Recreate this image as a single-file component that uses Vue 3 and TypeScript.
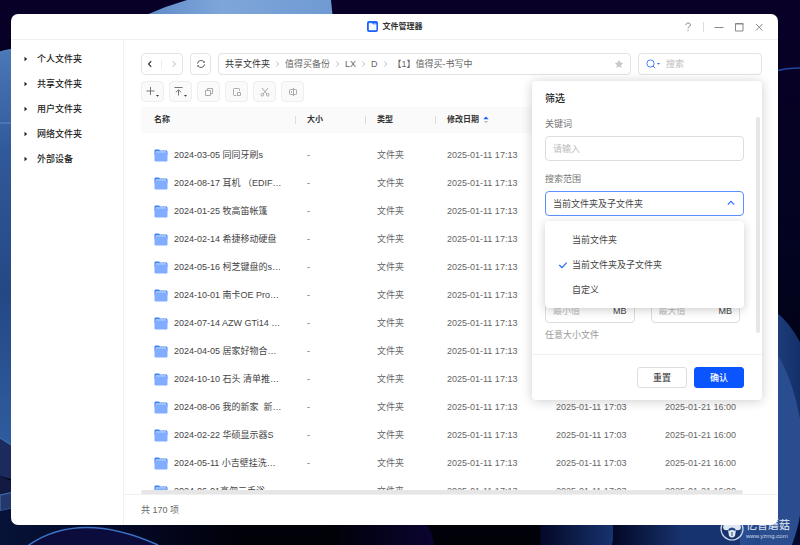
<script setup lang="ts">
import { ref } from 'vue'

interface FileRow {
  name: string
  modified: string
  created: string
}

const places: string[] = ['个人文件夹', '共享文件夹', '用户文件夹', '网络文件夹', '外部设备']
const crumbs: string[] = ['共享文件夹', '值得买备份', 'LX', 'D', '【1】值得买-书写中']
const scopes: string[] = ['当前文件夹', '当前文件夹及子文件夹', '自定义']

const names: string[] = [
  '2024-03-05 同同牙刷s',
  '2024-08-17 耳机 （EDIF…',
  '2024-01-25 牧高笛帐篷',
  '2024-02-14 希捷移动硬盘',
  '2024-05-16 柯芝键盘的s…',
  '2024-10-01 南卡OE Pro…',
  '2024-07-14 AZW GTi14 …',
  '2024-04-05 居家好物合…',
  '2024-10-10 石头 清单推…',
  '2024-08-06 我的新家\u00a0 新…',
  '2024-02-22 华硕显示器S',
  '2024-05-11 小吉壁挂洗…',
  '2024-06-01高勿二手浴…',
]
const rows: FileRow[] = names.map((name) => ({
  name,
  modified: '2025-01-11 17:13',
  created: '2025-01-11 17:03',
}))

const keyword = ref('')
const query = ref('')
const minSize = ref('')
const maxSize = ref('')
const scope = ref(scopes[1])
const scopeOpen = ref(true)

function pickScope(value: string): void {
  scope.value = value
  scopeOpen.value = false
}

function resetFilter(): void {
  keyword.value = ''
  minSize.value = ''
  maxSize.value = ''
  scope.value = scopes[1]
}
</script>

<template>
  <div class="desktop">
    <svg class="wallpaper" viewBox="0 0 800 545" preserveAspectRatio="none" aria-hidden="true">
      <defs>
        <linearGradient id="night" x1="0" y1="0" x2="0" y2="1">
          <stop offset="0" stop-color="#090027" />
          <stop offset="0.5" stop-color="#02041f" />
          <stop offset="1" stop-color="#010108" />
        </linearGradient>
        <linearGradient id="petal" x1="0" y1="0" x2="1" y2="0">
          <stop offset="0" stop-color="#5d8bc6" />
          <stop offset="0.4" stop-color="#7fa6da" />
          <stop offset="1" stop-color="#6f9ad2" />
        </linearGradient>
        <linearGradient id="left" x1="0" y1="0" x2="0" y2="1">
          <stop offset="0" stop-color="#4b78b8" />
          <stop offset="0.25" stop-color="#315a9a" />
          <stop offset="0.6" stop-color="#244884" />
          <stop offset="1" stop-color="#2f5da0" />
        </linearGradient>
        <linearGradient id="right" x1="0" y1="0" x2="1" y2="0">
          <stop offset="0" stop-color="#2a4f92" />
          <stop offset="1" stop-color="#14306a" />
        </linearGradient>
        <linearGradient id="corner" x1="0" y1="0" x2="1" y2="0">
          <stop offset="0" stop-color="#061238" />
          <stop offset="0.6" stop-color="#030722" />
          <stop offset="1" stop-color="#010108" />
        </linearGradient>
        <linearGradient id="fold" x1="0" y1="0" x2="1" y2="0">
          <stop offset="0" stop-color="#030826" />
          <stop offset="1" stop-color="#17336f" />
        </linearGradient>
        <linearGradient id="indigo" x1="0" y1="0" x2="1" y2="0">
          <stop offset="0" stop-color="#010108" />
          <stop offset="1" stop-color="#0a0430" />
        </linearGradient>
      </defs>
      <rect width="800" height="545" fill="url(#night)" />
      <path d="M146 15Q166 6 187 0H331L333 20H146Z" fill="url(#petal)" />
      <path d="M0 52Q6 50 14 49V450L0 438Z" fill="url(#left)" />
      <path d="M0 52Q6 50 14 49M0 123H14" fill="none" stroke="#5d89c4" />
      <path d="M0 438L14 447V480L0 476Z" fill="#1c2b5c" />
      <path d="M0 438L14 447" stroke="#4776bb" />
      <path d="M0 476L14 482V496H0Z" fill="#131a42" />
      <path d="M0 495L14 492V508L0 511Z" fill="#24386b" stroke="#4776bb" />
      <path d="M0 511L14 508V522H240V545H0Z" fill="url(#corner)" />
      <path d="M26 547Q85 508 168 547Z" transform="translate(0 4)" fill="#0c0c3c" />
      <path d="M26 547Q78 509 158 545" fill="#0c0c3c" stroke="#3a72c4" stroke-width="1.5" />
      <path d="M330 522H425Q433 534 434 545H330Z" fill="url(#indigo)" />
      <path d="M540 522H613Q615 534 612 545H540Z" fill="url(#fold)" />
      <path d="M613 522H683V545H613Z" fill="url(#fold)" />
      <path d="M683 522H780V545H683Z" fill="#16336f" />
      <path d="M776 71Q786 68 800 68" fill="none" stroke="#2147a0" stroke-width="1.5" />
      <path d="M776 312Q789 322 800 342V545H740V522H776Z" fill="url(#right)" />
      <path d="M776 352Q794 380 802 430V510Q797 530 792 545H760V522H776Z" fill="#294d8e" />
      <path d="M800 515V545H792Q798 530 800 515Z" fill="#050a2c" />
    </svg>

    <main class="window">
      <header class="titlebar">
        <h1 class="app-name">
          <svg width="11" height="11" viewBox="0 0 11 11" aria-hidden="true">
            <rect width="11" height="11" rx="2" fill="#1c62ff" />
            <path d="M2 2.2H5L6 3.5H9.2V9H2Z" fill="#f4f8ff" stroke="#fff" stroke-width=".4" />
            <path d="M6.2 2.2H9.2V3H6.8Z" fill="#8fb4ff" />
          </svg>
          文件管理器
        </h1>
        <div class="window-controls">
          <button class="plain" type="button" aria-label="帮助">
            <svg width="10" height="10" viewBox="0 0 10 10"><path d="M2.8 3.1C2.8 .3 7.4 .3 7.4 3C7.4 4.7 5 4.6 5 6.5M5 8V9.2" /></svg>
          </button>
          <span class="control-rule"></span>
          <button class="plain" type="button" aria-label="最小化">
            <svg width="10" height="10" viewBox="0 0 10 10"><path d="M.5 5.5H9.5" /></svg>
          </button>
          <button class="plain" type="button" aria-label="最大化">
            <svg width="10" height="10" viewBox="0 0 10 10"><path d="M1.5 1.5H9V9H1.5Z" /><path d="M1 2H9.5" /></svg>
          </button>
          <button class="plain" type="button" aria-label="关闭">
            <svg width="10" height="10" viewBox="0 0 10 10"><path d="M2 2L8.5 8.5M8.5 2L2 8.5" /></svg>
          </button>
        </div>
      </header>

      <div class="body">
        <nav class="sidebar">
          <a v-for="place in places" :key="place" class="place" href="#">
            <svg width="4" height="6" viewBox="0 0 4 6" aria-hidden="true"><path d="M.5 .8L3.2 3L.5 5.2Z" fill="#222" /></svg>
            {{ place }}
          </a>
        </nav>

        <section class="content">
          <div class="location-bar">
            <div class="history box">
              <button class="plain" type="button" aria-label="后退">
                <svg width="10" height="10" viewBox="0 0 10 10"><path d="M6.2 2.2L3.6 5L6.2 7.8" class="back" /></svg>
              </button>
              <span class="history-rule"></span>
              <button class="plain" type="button" aria-label="前进">
                <svg width="10" height="10" viewBox="0 0 10 10"><path d="M3.8 2.2L6.4 5L3.8 7.8" class="forward" /></svg>
              </button>
            </div>
            <button class="reload box" type="button" aria-label="刷新">
              <svg width="10" height="10" viewBox="0 0 10 10"><path d="M1.5 4.6A3.5 3.5 0 0 1 8 3.2M8.5 5.4A3.5 3.5 0 0 1 2 6.8" stroke="#555" /><path d="M6.9 3.7H8.8V1.9ZM3.1 6.3H1.2V8.1Z" fill="#555" /></svg>
            </button>
            <div class="path box">
              <template v-for="(crumb, i) in crumbs" :key="crumb">
                <svg v-if="i" class="crumb-arrow" width="5" height="8" viewBox="0 0 5 8" aria-hidden="true"><path d="M1.3 1.5L3.7 4L1.3 6.5" /></svg>
                <a class="crumb" :class="{ first: i === 0 }" href="#">{{ crumb }}</a>
              </template>
              <button class="plain star" type="button" aria-label="收藏">
                <svg width="10" height="10" viewBox="0 0 10 10"><path d="M5 .8L6.3 3.5L9.2 3.9L7.1 5.9L7.6 8.9L5 7.5L2.4 8.9L2.9 5.9L.8 3.9L3.7 3.5Z" fill="#c8c8c8" stroke="none" /></svg>
              </button>
            </div>
            <div class="search">
              <label class="search-box box">
                <svg width="14" height="10" viewBox="0 0 14 10" aria-hidden="true"><g fill="none" stroke="#4c7dff"><circle cx="4.5" cy="4.5" r="3.6" /><path d="M7 7L9.2 9.2" /></g><path d="M11 4H14L12.5 5.8Z" fill="#2b62ff" /></svg>
                <input v-model="query" type="search" placeholder="搜索" aria-label="搜索">
              </label>

              <form class="filter" @submit.prevent>
                <div class="filter-scroll">
                  <h2>筛选</h2>
                  <label class="field-label" for="keyword">关键词</label>
                  <input id="keyword" v-model="keyword" class="field" type="text" placeholder="请输入">
                  <label class="field-label" for="scope">搜索范围</label>
                  <div class="select-wrap">
                    <select id="scope" v-model="scope" class="field active" @mousedown.prevent="scopeOpen = !scopeOpen">
                      <option v-for="item in scopes" :key="item" :value="item">{{ item }}</option>
                    </select>
                    <svg class="select-arrow" width="10" height="8" viewBox="0 0 10 8" aria-hidden="true"><path d="M1.8 5.6L5 2.4L8.2 5.6" /></svg>
                    <div v-if="scopeOpen" class="menu" role="listbox" aria-label="搜索范围">
                      <button v-for="item in scopes" :key="item" class="menu-item" type="button" role="option" :aria-selected="item === scope" @click="pickScope(item)">
                        <svg width="10" height="8" viewBox="0 0 10 8" aria-hidden="true"><path v-if="item === scope" d="M1.3 4L4 6.6L8.7 1.6" /></svg>
                        {{ item }}
                      </button>
                    </div>
                  </div>
                  <div class="sizes">
                    <label class="field size"><input v-model="minSize" type="text" placeholder="最小值" aria-label="最小值"><span>MB</span></label>
                    <label class="field size"><input v-model="maxSize" type="text" placeholder="最大值" aria-label="最大值"><span>MB</span></label>
                  </div>
                  <p class="hint">任意大小文件</p>
                  <span class="filter-thumb"></span>
                </div>
                <footer class="filter-actions">
                  <button class="action" type="button" @click="resetFilter">重置</button>
                  <button class="action primary" type="submit">确认</button>
                </footer>
              </form>
            </div>
          </div>

          <div class="toolbar">
            <button class="tool" type="button" aria-label="新建">
              <svg width="14" height="12" viewBox="0 0 14 12"><path d="M4.5 1V9M.5 5H8.5" /><path d="M10 9H13L11.5 10.8Z" class="caret" /></svg>
            </button>
            <button class="tool" type="button" aria-label="上传">
              <svg width="14" height="12" viewBox="0 0 14 12"><path d="M.5 1.5H8.5M4.5 9.5V4M1.8 6.4L4.5 3.8L7.2 6.4" /><path d="M10 9H13L11.5 10.8Z" class="caret" /></svg>
            </button>
            <button class="tool off" type="button" aria-label="复制">
              <svg width="10" height="10" viewBox="0 0 10 10"><path d="M3.5 3V1.5H8.5V6.5H6.5M1.5 3.5H6.5V8.5H1.5Z" /></svg>
            </button>
            <button class="tool off" type="button" aria-label="粘贴">
              <svg width="10" height="10" viewBox="0 0 10 10"><path d="M4.5 8.5H2.3Q1.5 8.5 1.5 7.7V2.3Q1.5 1.5 2.3 1.5H6.7Q7.5 1.5 7.5 2.3V4M5.5 5.5H8.5V8.5H5.5Z" /></svg>
            </button>
            <button class="tool off" type="button" aria-label="剪切">
              <svg width="10" height="10" viewBox="0 0 10 10"><path d="M2 1L7 7M8 1L3 7" /><circle cx="2.3" cy="7.8" r="1.3" /><circle cx="7.7" cy="7.8" r="1.3" /></svg>
            </button>
            <button class="tool off" type="button" aria-label="重命名">
              <svg width="10" height="10" viewBox="0 0 10 10"><path d="M5.5 2.5H2.3Q1.5 2.5 1.5 3.3V6.7Q1.5 7.5 2.3 7.5H5.5M5.5 2.5H7.7Q8.5 2.5 8.5 3.3V6.7Q8.5 7.5 7.7 7.5H5.5M5.5 .8V9.2M3.5 4V6" /></svg>
            </button>
          </div>

          <div class="list">
            <table>
              <colgroup>
                <col class="col-name"><col class="col-short"><col class="col-short"><col class="col-date"><col class="col-date"><col class="col-date">
              </colgroup>
              <thead>
                <tr>
                  <th>名称</th>
                  <th>大小</th>
                  <th>类型</th>
                  <th>
                    修改日期
                    <svg class="sort" width="6" height="8" viewBox="0 0 6 8" aria-hidden="true"><path d="M.3 3.2L3 .6L5.7 3.2Z" fill="#1b5cff" /><path d="M.6 5L3 7.2L5.4 5Z" fill="#b9c3d6" /></svg>
                  </th>
                  <th></th>
                  <th></th>
                </tr>
              </thead>
              <tbody>
                <tr v-for="row in rows" :key="row.name">
                  <td>
                    <span class="file">
                      <svg width="14" height="13" viewBox="0 0 14 13" aria-hidden="true">
                        <path d="M.5 1.2Q.5 .4 1.3 .4H5L6 1.4H12.4Q13.4 1.4 13.4 2.4V6H.5Z" fill="#3d87f5" />
                        <rect x="1.8" y="2.2" width="10.4" height="3" fill="#b5d2ff" />
                        <path d="M.5 3.4H13.5V11.5Q13.5 12.5 12.5 12.5H1.5Q.5 12.5 .5 11.5Z" fill="#80adff" />
                      </svg>
                      {{ row.name }}
                    </span>
                  </td>
                  <td>-</td>
                  <td>文件夹</td>
                  <td>{{ row.modified }}</td>
                  <td>{{ row.created }}</td>
                  <td>2025-01-21 16:00</td>
                </tr>
              </tbody>
            </table>
          </div>
          <div class="track"><div class="thumb"></div></div>
          <footer class="status">共 170 项</footer>
        </section>
      </div>
    </main>

    <div class="watermark">
      <svg width="24" height="24" viewBox="0 0 24 24" aria-hidden="true">
        <circle cx="12" cy="12" r="11" fill="none" stroke="#cfd9ea" stroke-width="1.2" />
        <path d="M3 11Q4 3 12 3Q20 3 21 11Q20 14 16 13L15 19Q12 22 9 19L8 13Q4 14 3 11Z" fill="#dfe7f3" />
        <path d="M8 13Q9 10.5 12 10.5Q15 10.5 16 13L15 14Q12 12 9 14Z" fill="#254a87" />
        <path d="M12 15V19" stroke="#254a87" />
      </svg>
      <div class="watermark-text"><strong>亿智蘑菇</strong><span>www.yzmg.com</span></div>
    </div>
  </div>
</template>

<style>
body {
  margin: 0;
  background: #04021c;
}
</style>

<style scoped>
.desktop {
  position: relative;
  box-sizing: border-box;
  height: 100vh;
  padding: 14px 22px 20px 11px;
  overflow: hidden;
  font-family: "Liberation Sans", "Noto Sans CJK SC", sans-serif;
  font-size: 9px;
  line-height: 14px;
  color: #444;
}
.desktop *,
.desktop *::before {
  box-sizing: border-box;
}
.wallpaper {
  position: absolute;
  inset: 0;
  width: 100%;
  height: 100%;
}
button,
input,
select {
  margin: 0;
  padding: 0;
  font: inherit;
  color: inherit;
}
a {
  color: inherit;
  text-decoration: none;
}
svg {
  flex: none;
}
.window {
  position: relative;
  z-index: 1;
  display: flex;
  flex-direction: column;
  height: 100%;
  border-radius: 7px;
  background: #fff;
}
.titlebar {
  display: grid;
  grid-template-columns: 1fr auto 1fr;
  align-items: center;
  height: 26px;
  border-bottom: 1px solid #f0f0f0;
}
.app-name {
  grid-column: 2;
  display: flex;
  align-items: center;
  gap: 5px;
  margin: 0;
  font-size: 8px;
  font-weight: 700;
  color: #333;
}
.window-controls {
  display: flex;
  justify-content: flex-end;
  align-items: center;
  gap: 10px;
  padding-right: 14px;
}
.plain {
  display: grid;
  place-items: center;
  border: 0;
  background: none;
}
.plain svg {
  fill: none;
  stroke: #888;
}
.plain .back {
  stroke: #333;
  stroke-width: 1.2;
}
.plain .forward {
  stroke: #bbb;
}
.control-rule {
  width: 1px;
  height: 10px;
  background: #ddd;
}
.body {
  display: flex;
  flex: 1;
  min-height: 0;
}
.sidebar {
  flex: none;
  width: 113px;
  padding: 6px 0 0 13px;
  border-right: 1px solid #f0f0f0;
}
.place {
  display: flex;
  align-items: center;
  gap: 9px;
  height: 25px;
  font-weight: 500;
  color: #222;
}
.content {
  display: flex;
  flex: 1;
  flex-direction: column;
  min-width: 0;
}
.box {
  height: 22px;
  border: 1px solid #e3e3e3;
  border-radius: 4px;
  background: #fff;
}
.location-bar {
  display: flex;
  gap: 7px;
  padding: 13px 16px 0 17px;
}
.history {
  display: flex;
  justify-content: space-around;
  align-items: center;
  width: 42px;
}
.history-rule {
  width: 1px;
  height: 9px;
  background: #eee;
}
.reload {
  display: grid;
  place-items: center;
  width: 21px;
}
.reload svg {
  fill: none;
}
.path {
  display: flex;
  flex: 1;
  align-items: center;
  gap: 5px;
  padding: 0 6px;
  white-space: nowrap;
}
.crumb {
  color: #666;
}
.crumb.first {
  color: #333;
}
.crumb-arrow {
  fill: none;
  stroke: #bbb;
}
.star {
  margin-left: auto;
}
.search {
  position: relative;
  width: 124px;
}
.search-box {
  display: flex;
  align-items: center;
  gap: 6px;
  padding: 0 7px;
}
.search-box input,
.size input {
  flex: 1;
  min-width: 0;
  width: 100%;
  border: 0;
  outline: 0;
  background: none;
}
input::placeholder {
  color: #bbb;
  opacity: 1;
}
.filter {
  position: absolute;
  z-index: 2;
  top: 28px;
  right: 0;
  width: 230px;
  border-radius: 4px;
  background: #fff;
  box-shadow: 0 1px 12px rgba(0, 0, 0, 0.2);
}
.filter-scroll {
  position: relative;
  padding: 11px 18px 12px 13px;
  border-bottom: 1px solid #f0f0f0;
}
.filter h2 {
  margin: 0 0 11px;
  font-size: 10px;
  line-height: 14px;
  font-weight: 500;
  color: #222;
}
.field-label {
  display: block;
  margin-bottom: 5px;
  color: #777;
}
.field {
  display: block;
  width: 100%;
  height: 25px;
  padding: 0 7px;
  border: 1px solid #ddd;
  border-radius: 4px;
  background: #fff;
  color: #444;
}
#keyword {
  margin-bottom: 11px;
}
.select-wrap {
  position: relative;
}
.active {
  appearance: none;
  border-color: #5c90ff;
  outline: 0;
}
.select-arrow {
  position: absolute;
  top: 8px;
  right: 8px;
  fill: none;
  stroke: #2b6cff;
  stroke-width: 1.2;
  pointer-events: none;
}
.menu {
  position: absolute;
  z-index: 1;
  top: 30px;
  right: 0;
  left: 0;
  padding: 6px 0;
  border-radius: 4px;
  background: #fff;
  box-shadow: 0 2px 10px rgba(0, 0, 0, 0.2);
}
.menu-item {
  display: flex;
  align-items: center;
  gap: 4px;
  width: 100%;
  height: 25px;
  padding-left: 13px;
  border: 0;
  background: none;
  text-align: left;
}
.menu-item svg {
  fill: none;
  stroke: #1f66ff;
  stroke-width: 1.2;
}
.sizes {
  display: flex;
  gap: 16px;
  padding: 82px 4px 0 0;
}
.size {
  display: flex;
  flex: 1;
  align-items: center;
  min-width: 0;
}
.hint {
  margin: 5px 0 0;
  color: #999;
}
.filter-thumb {
  position: absolute;
  top: 36px;
  right: 2px;
  bottom: 21px;
  width: 4px;
  border-radius: 2px;
  background: #e6e6e6;
}
.filter-actions {
  display: flex;
  justify-content: flex-end;
  gap: 7px;
  padding: 12px 18px;
}
.action {
  width: 50px;
  height: 21px;
  border: 1px solid #ddd;
  border-radius: 3px;
  background: #fff;
  font-weight: 500;
}
.action.primary {
  border-color: #0a55ff;
  background: #0a55ff;
  color: #fff;
}
.toolbar {
  display: flex;
  gap: 5px;
  padding: 6px 16px 5px 17px;
}
.tool {
  display: grid;
  place-items: center;
  width: 23px;
  height: 21px;
  border: 1px solid #eee;
  border-radius: 4px;
  background: #fafafa;
}
.tool svg {
  fill: none;
  stroke: #777;
}
.tool.off svg {
  stroke: #aaa;
}
.tool .caret {
  fill: #333;
  stroke: none;
}
.list {
  flex: 1;
  min-height: 0;
  margin: 0 16px 0 17px;
  overflow: hidden;
}
table {
  width: 100%;
  border-collapse: collapse;
  table-layout: fixed;
}
.col-name {
  width: 154px;
}
.col-short {
  width: 70px;
}
.col-date {
  width: 109px;
}
th,
td {
  padding: 0 0 0 12px;
  text-align: left;
  white-space: nowrap;
}
th {
  position: relative;
  height: 26px;
  background: #fafafa;
  color: #333;
  font-size: 8px;
  font-weight: 700;
}
th:first-child,
td:first-child {
  padding-left: 13px;
}
th + th::before {
  content: "";
  position: absolute;
  top: 9px;
  left: 0;
  width: 1px;
  height: 8px;
  background: #ddd;
}
.sort {
  margin-left: 2px;
  vertical-align: middle;
}
tbody::before {
  content: "";
  display: block;
  height: 8px;
}
td {
  height: 28px;
  color: #666;
}
.file {
  display: flex;
  align-items: center;
  gap: 6px;
  color: #444;
}
.track {
  padding: 0 35px 0 17px;
  border-bottom: 1px solid #f0f0f0;
}
.thumb {
  height: 4px;
  border-radius: 2px;
  background: #e6e6e6;
}
.status {
  height: 30px;
  padding: 8px 17px;
  color: #666;
}
.watermark {
  position: absolute;
  right: 10px;
  bottom: 4px;
  display: flex;
  align-items: center;
  gap: 2px;
  color: #cfd9ea;
}
.watermark-text {
  display: flex;
  flex-direction: column;
}
.watermark strong {
  font-size: 11px;
  line-height: 14px;
  font-weight: 500;
}
.watermark span {
  font-size: 6px;
  line-height: 8px;
}
</style>
